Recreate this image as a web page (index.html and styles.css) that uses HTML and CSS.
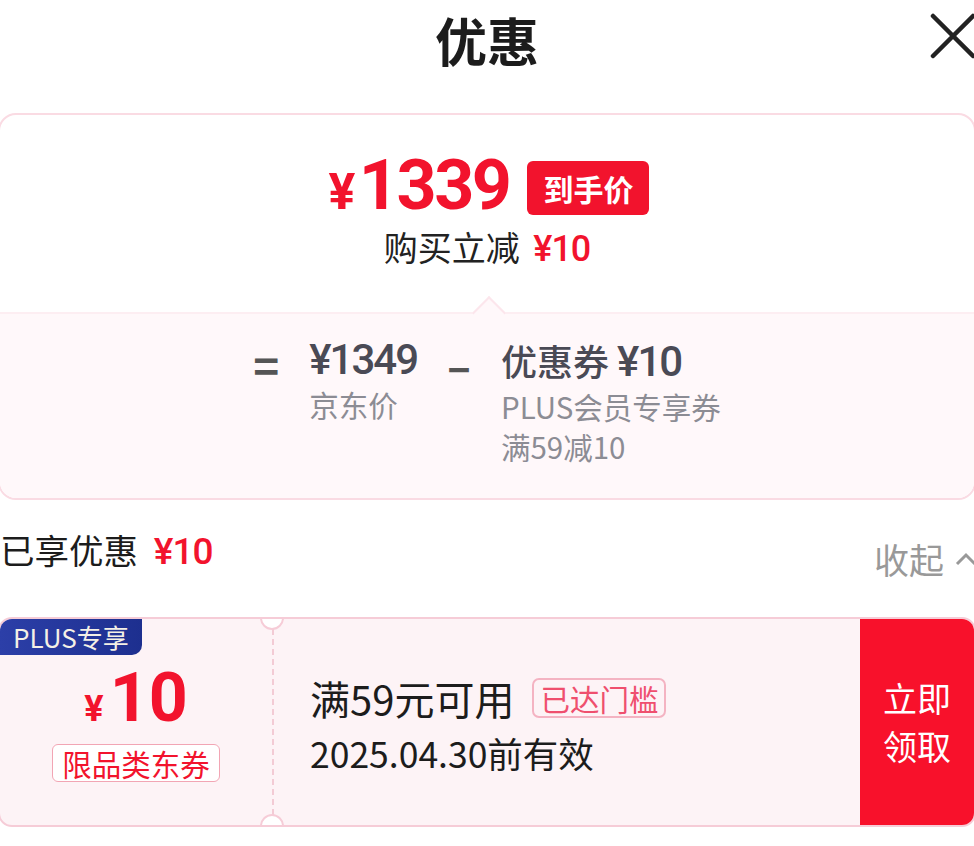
FILE: index.html
```html
<!DOCTYPE html>
<html lang="zh-CN">
<head>
    <meta charset="UTF-8">
    <meta name="viewport" content="width=device-width, initial-scale=1.0">
    <title>优惠</title>
    <link rel="stylesheet" href="styles.css">
</head>
<body>
    <div class="header">
        <span></span>
        <h1 class="title">优惠</h1>
        <button class="close" aria-label="关闭">
            <svg width="46" height="46" viewBox="0 0 46 46">
                <path d="M3 3 L43 43 M43 3 L3 43" stroke="#222" stroke-width="4.5" stroke-linecap="round" fill="none"/>
            </svg>
        </button>
    </div>

    <div class="card">
        <div class="card-top">
            <div class="price-row">
                <span class="price"><span class="yen">¥</span>1339</span>
                <span class="badge">到手价</span>
            </div>
            <div class="save">购买立减 <span class="red num">¥10</span></div>
        </div>
        <div class="card-bottom">
            <span class="op">=</span>
            <div class="col">
                <div class="col-main num">¥1349</div>
                <div class="col-sub">京东价</div>
            </div>
            <span class="op">–</span>
            <div class="col">
                <div class="col-main">优惠券 <span class="num">¥10</span></div>
                <div class="col-sub">PLUS会员专享券</div>
                <div class="col-sub">满59减10</div>
            </div>
        </div>
    </div>

    <div class="enjoyed">
        <div class="enjoyed-left">已享优惠 <span class="red num">¥10</span></div>
        <div class="fold">收起
            <svg width="24" height="14" viewBox="0 0 24 14">
                <path d="M3 12 L12 3 L21 12" stroke="#999" stroke-width="3" fill="none"/>
            </svg>
        </div>
    </div>

    <div class="coupon">
        <div class="coupon-left">
            <div class="plus">PLUS专享</div>
            <div class="amount"><span class="amount-yen">¥</span>10</div>
            <div class="limit">限品类东券</div>
        </div>
        <div class="coupon-mid">
            <div class="cond">满59元可用 <span class="reached">已达门槛</span></div>
            <div class="date">2025.04.30前有效</div>
        </div>
        <div class="get">立即<br>领取</div>
    </div>
</body>
</html>
```

FILE: styles.css
```css
body {
    margin: 0;
    width: 974px;
    overflow: hidden;
    background: #fff;
    color: #1a1a1a;
    font-family: "Noto Sans CJK SC", "Noto Sans", sans-serif;
}
.num {
    font-family: Roboto, "Noto Sans CJK SC", sans-serif;
    letter-spacing: -1px;
}
.red {
    color: #f2132d;
}

.header {
    display: grid;
    grid-template-columns: 1fr auto 1fr;
    align-items: start;
    height: 113px;
}
.title {
    margin: 8px 0 0;
    font-size: 52px;
    line-height: 64px;
    font-weight: 700;
    color: #1c1c1c;
}
.close {
    justify-self: end;
    margin: 13px -2px 0 0;
    padding: 0;
    border: none;
    background: none;
}

.card {
    margin: 0 -2px;
    border: 2px solid #fadbe3;
    border-radius: 18px;
}
.card-top {
    height: 197px;
    display: flex;
    flex-direction: column;
    align-items: center;
    padding-top: 38px;
    box-sizing: border-box;
}
.price-row {
    display: flex;
    align-items: center;
    gap: 18px;
    height: 70px;
    margin-left: 4px;
}
.price {
    font-family: Roboto, sans-serif;
    font-weight: 700;
    font-size: 70px;
    letter-spacing: -2.5px;
    color: #f2132d;
    line-height: 70px;
}
.yen {
    font-size: 50px;
    margin-right: 6px;
}
.badge {
    background: #f2132d;
    color: #fff;
    font-weight: 700;
    font-size: 30px;
    line-height: 54px;
    padding: 0 16px;
    border-radius: 6px;
}
.save {
    margin-top: 2px;
    font-size: 34px;
    line-height: 44px;
    color: #222;
}
.save .num {
    font-size: 36px;
    font-weight: 500;
    margin-left: 6px;
}

.card-bottom {
    position: relative;
    height: 186px;
    background: #fff8fa;
    border-top: 2px solid #fdeef2;
    border-radius: 0 0 16px 16px;
    box-sizing: border-box;
    display: flex;
    justify-content: center;
    align-items: flex-start;
    gap: 30px;
    padding-top: 22px;
    color: #4a4a55;
}
.card-bottom::before {
    content: "";
    position: absolute;
    top: -13px;
    left: 477px;
    width: 22px;
    height: 22px;
    background: #fff8fa;
    border-top: 2px solid #fce6ec;
    border-left: 2px solid #fce6ec;
    transform: rotate(45deg);
}
.op {
    font-size: 44px;
    font-weight: 700;
    line-height: 48px;
    color: #555;
    margin-top: 4px;
}
.col-main {
    font-size: 36px;
    line-height: 48px;
    font-weight: 500;
}
.col-main .num,
.col-main.num {
    font-size: 42px;
    font-weight: 500;
    letter-spacing: -2px;
}
.col-sub {
    font-size: 29.5px;
    line-height: 40px;
    color: #8c8c94;
}

.enjoyed {
    display: flex;
    justify-content: space-between;
    align-items: flex-start;
    height: 117px;
    padding-top: 26px;
    box-sizing: border-box;
}
.enjoyed-left {
    font-size: 34.5px;
    line-height: 46px;
    color: #1c1c1c;
}
.enjoyed-left .num {
    font-size: 37px;
    font-weight: 500;
    margin-left: 8px;
}
.fold {
    display: flex;
    align-items: center;
    gap: 10px;
    margin-top: 10px;
    margin-right: -4px;
    font-size: 35px;
    line-height: 46px;
    color: #999;
}

.coupon {
    display: flex;
    height: 210px;
    margin: 0 -2px;
    border: 2px solid #f6ccd7;
    border-radius: 14px;
    background: #fdf3f6;
    box-sizing: border-box;
    overflow: hidden;
}
.coupon-left {
    position: relative;
    width: 274px;
    flex: none;
    border-right: 2px dashed #f3cbd5;
    box-sizing: border-box;
    display: flex;
    flex-direction: column;
    align-items: center;
}
.coupon-left::before,
.coupon-left::after {
    content: "";
    position: absolute;
    right: -12px;
    width: 20px;
    height: 20px;
    border-radius: 50%;
    background: #fff;
    border: 2px solid #f6ccd7;
}
.coupon-left::before {
    top: -13px;
}
.coupon-left::after {
    bottom: -13px;
}
.plus {
    align-self: flex-start;
    background: linear-gradient(90deg, #2c3fa8, #1d2f8f);
    color: #f4f0e6;
    font-size: 26px;
    line-height: 36px;
    padding: 0 13px;
    border-radius: 0 0 10px 0;
}
.amount {
    margin-top: 10px;
    font-family: Roboto, sans-serif;
    font-weight: 700;
    font-size: 68px;
    line-height: 66px;
    color: #f2132d;
}
.amount-yen {
    font-size: 36px;
    margin-right: 6px;
}
.limit {
    margin-top: 2px;
    font-size: 29.5px;
    line-height: 36px;
    padding: 0 9px;
    color: #f2132d;
    border: 1px solid #f2a5b4;
    border-radius: 6px;
    background: #fff;
}
.coupon-mid {
    flex: 1;
    display: flex;
    flex-direction: column;
    justify-content: center;
    padding: 6px 0 0 36px;
}
.cond {
    display: flex;
    align-items: center;
    gap: 18px;
    font-size: 40px;
    line-height: 48px;
    color: #1c1c1c;
}
.reached {
    font-size: 29.5px;
    line-height: 36px;
    padding: 0 6px;
    color: #ef4f6e;
    border: 2px solid #f4b3c2;
    border-radius: 7px;
}
.date {
    margin-top: 7px;
    font-size: 35.5px;
    line-height: 48px;
    color: #1c1c1c;
}
.get {
    width: 114px;
    flex: none;
    background: #f8112b;
    color: #fff;
    font-size: 34px;
    line-height: 48px;
    display: flex;
    align-items: center;
    justify-content: center;
    text-align: center;
}
```
